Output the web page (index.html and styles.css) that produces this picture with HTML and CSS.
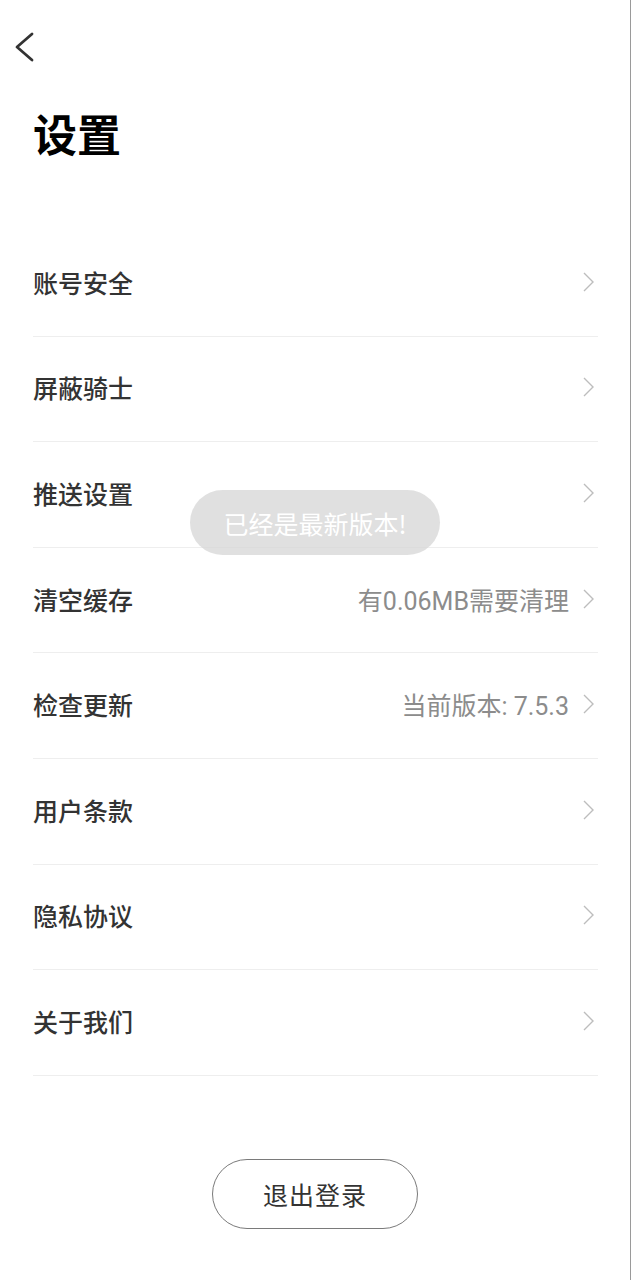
FILE: index.html
```html
<!DOCTYPE html>
<html lang="zh-CN">
<head>
<meta charset="utf-8">
<title>设置</title>
<link rel="stylesheet" href="styles.css">
</head>
<body>
<div class="page">
  <div class="topbar">
    <svg class="back" width="22" height="30" viewBox="0 0 22 30"><polyline points="18,2 3,15 18,28" fill="none" stroke="#333" stroke-width="2.8" stroke-linecap="round" stroke-linejoin="round"/></svg>
  </div>
  <h1 class="title">设置</h1>
  <ul class="list">
    <li class="row"><span class="label">账号安全</span><span class="value"></span><svg class="arrow" width="12" height="20" viewBox="0 0 12 20"><polyline points="2,1 11,10 2,19" fill="none" stroke="#bdbdbd" stroke-width="1.4"/></svg></li>
    <li class="row"><span class="label">屏蔽骑士</span><span class="value"></span><svg class="arrow" width="12" height="20" viewBox="0 0 12 20"><polyline points="2,1 11,10 2,19" fill="none" stroke="#bdbdbd" stroke-width="1.4"/></svg></li>
    <li class="row"><span class="label">推送设置</span><span class="value"></span><svg class="arrow" width="12" height="20" viewBox="0 0 12 20"><polyline points="2,1 11,10 2,19" fill="none" stroke="#bdbdbd" stroke-width="1.4"/></svg></li>
    <li class="row"><span class="label">清空缓存</span><span class="value">有0.06MB需要清理</span><svg class="arrow" width="12" height="20" viewBox="0 0 12 20"><polyline points="2,1 11,10 2,19" fill="none" stroke="#bdbdbd" stroke-width="1.4"/></svg></li>
    <li class="row"><span class="label">检查更新</span><span class="value">当前版本: 7.5.3</span><svg class="arrow" width="12" height="20" viewBox="0 0 12 20"><polyline points="2,1 11,10 2,19" fill="none" stroke="#bdbdbd" stroke-width="1.4"/></svg></li>
    <li class="row"><span class="label">用户条款</span><span class="value"></span><svg class="arrow" width="12" height="20" viewBox="0 0 12 20"><polyline points="2,1 11,10 2,19" fill="none" stroke="#bdbdbd" stroke-width="1.4"/></svg></li>
    <li class="row"><span class="label">隐私协议</span><span class="value"></span><svg class="arrow" width="12" height="20" viewBox="0 0 12 20"><polyline points="2,1 11,10 2,19" fill="none" stroke="#bdbdbd" stroke-width="1.4"/></svg></li>
    <li class="row"><span class="label">关于我们</span><span class="value"></span><svg class="arrow" width="12" height="20" viewBox="0 0 12 20"><polyline points="2,1 11,10 2,19" fill="none" stroke="#bdbdbd" stroke-width="1.4"/></svg></li>
  </ul>
  <div class="actions">
    <button class="logout">退出登录</button>
  </div>
  <div class="toast">已经是最新版本!</div>
</div>
</body>
</html>
```

FILE: styles.css
```css
* { box-sizing: border-box; }
html, body {
  margin: 0;
  padding: 0;
  background: #fff;
}
body {
  font-family: Roboto, "Noto Sans CJK SC", "Noto Sans", sans-serif;
  color: #333;
}
.page {
  position: relative;
  width: 631px;
  min-height: 1280px;
  border-right: 1px solid #9a9a9a;
  background: #fff;
}
.topbar {
  padding: 32px 0 0 14px;
  height: 62px;
}
.back { display: block; }
.title {
  margin: 49px 0 0 33px;
  font-family: "Noto Sans CJK SC", sans-serif;
  font-size: 44px;
  line-height: 44px;
  font-weight: 700;
  color: #000;
}
.list {
  list-style: none;
  margin: 76px 32px 0 33px;
  padding: 0;
}
.row {
  height: 105.6px;
  display: flex;
  align-items: center;
  padding-bottom: 3px;
  border-bottom: 1px solid #eeeeee;
}
.label {
  font-family: "Noto Sans CJK SC", sans-serif;
  font-size: 25px;
  font-weight: 500;
  color: #333;
  flex: 1;
}
.value {
  font-size: 25px;
  color: #8c8c8c;
  margin-right: 13px;
}
.arrow {
  display: block;
  margin-right: 4px;
}
.actions {
  display: flex;
  justify-content: center;
  margin-top: 83px;
}
.logout {
  width: 206px;
  height: 70px;
  border: 1px solid #7a7a7a;
  border-radius: 35px;
  background: #fff;
  font-family: "Noto Sans CJK SC", sans-serif;
  font-size: 25px;
  color: #333;
  padding: 0;
  letter-spacing: 1px;
}
.toast {
  position: absolute;
  left: 190px;
  top: 490px;
  width: 250px;
  height: 65px;
  border-radius: 33px;
  background: rgba(214, 214, 214, 0.75);
  color: #fff;
  font-family: "Noto Sans CJK SC", sans-serif;
  font-size: 25px;
  display: flex;
  align-items: center;
  justify-content: center;
}
```
